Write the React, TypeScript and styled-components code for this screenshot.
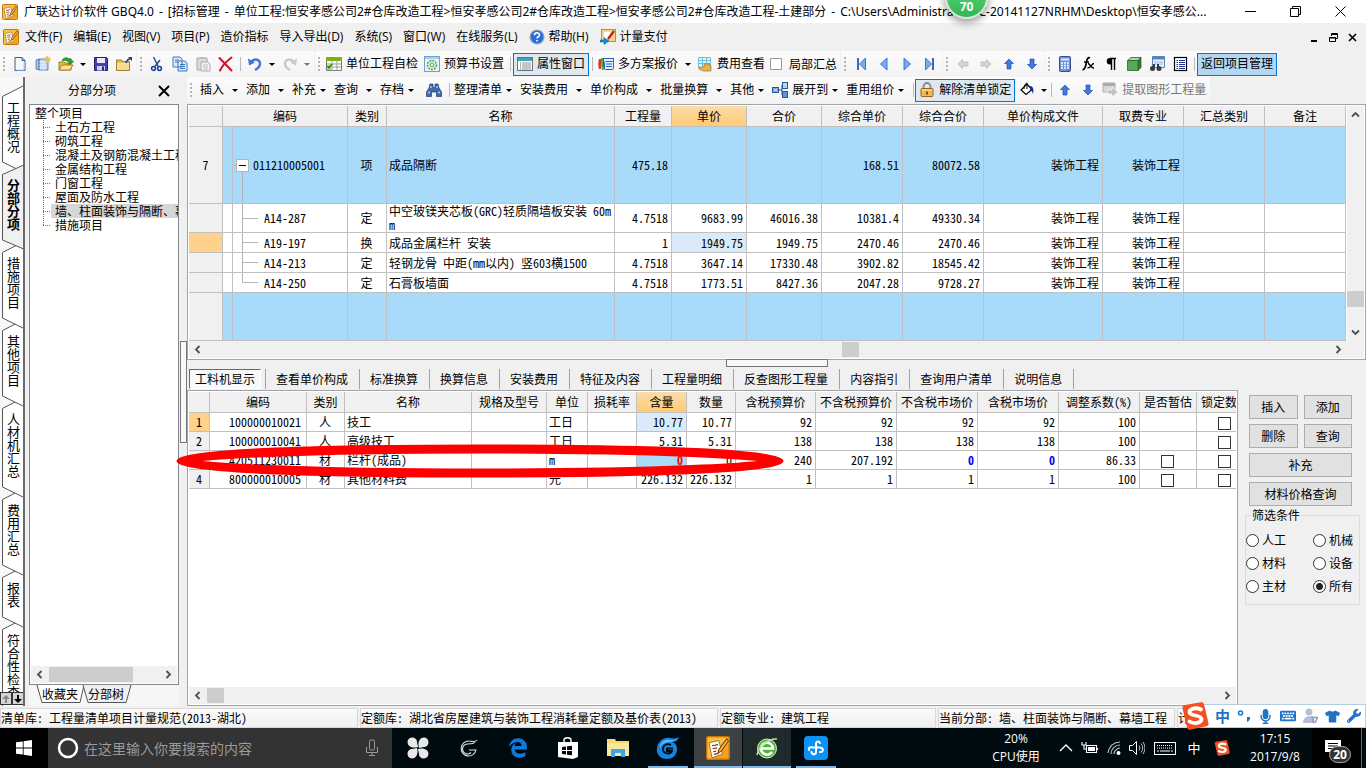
import React from "react";
import styled, { createGlobalStyle, css } from "styled-components";
import { FaEdgeLegacy, FaKeyboard, FaMicrophone, FaTshirt, FaWrench } from "react-icons/fa";

const uiFont = `"Open Sans", "Noto Sans CJK SC", sans-serif`;
const gridFont = `"Noto Sans CJK SC", sans-serif`;

const GlobalStyle = createGlobalStyle`
  * { box-sizing: border-box; }
  body { margin: 0; background: #f0f0f0; color: #000; font: 12px/16px ${uiFont}; overflow: hidden; }
  button, input { font: inherit; color: inherit; margin: 0; }
  button { border: 0; padding: 0; background: none; }
`;

const simsun = css`
  font-family: ${gridFont};
  font-feature-settings: "hwid";
`;

const Page = styled.div`
  display: flex;
  flex-direction: column;
  height: 100vh;
  min-width: 0;
  position: relative;
  overflow: hidden;
`;

/* ---------- title and menu ---------- */

const TitleBar = styled.header`
  display: flex;
  align-items: center;
  height: 23px;
  flex: none;
  padding: 0 3px 0 2px;
  gap: 6px;
  background: #fff;
`;

const TitleText = styled.h1`
  margin: 0;
  flex: 1;
  min-width: 0;
  font-family: "Noto Sans", "Noto Sans CJK SC", sans-serif;
  font-size: 12px;
  font-weight: 400;
  line-height: 16px;
  white-space: nowrap;
  overflow: hidden;
`;

const Dash = styled.span`
  margin: 0 5px;
`;

const WindowButtons = styled.div`
  display: flex;
`;

const WindowButton = styled.button`
  display: flex;
  align-items: center;
  justify-content: center;
  width: 45px;
  height: 20px;
`;

const SpeedBadge = styled.div`
  position: absolute;
  left: 945px;
  top: -24px;
  width: 43px;
  height: 43px;
  border-radius: 50%;
  border: 2px solid #d8e4da;
  background: linear-gradient(#5fdc80, #35b554);
  box-shadow: 0 3px 8px rgba(0, 0, 0, 0.45);
  color: #fff;
  font-weight: 700;
  line-height: 16px;
  padding-top: 21px;
  text-align: center;
  z-index: 5;
`;

const MenuBar = styled.nav`
  display: flex;
  align-items: center;
  height: 28px;
  flex: none;
  padding: 0 4px 0 3px;
`;

const MenuItem = styled.button`
  display: flex;
  align-items: center;
  gap: 4px;
  height: 20px;
  padding: 0 5px 0 6px;
  white-space: nowrap;
`;

const Spacer = styled.div`
  flex: 1;
`;

const MdiButton = styled.button`
  display: flex;
  align-items: center;
  justify-content: center;
  width: 19px;
  height: 16px;
`;

/* ---------- toolbars ---------- */

const ToolRow = styled.div<{ $h: number }>`
  display: flex;
  align-items: flex-start;
  height: ${(p) => p.$h}px;
  flex: none;
  gap: 1px;
  overflow: hidden;
`;

const ToolGroup = styled.div`
  display: flex;
  align-items: center;
  height: 26px;
  flex: none;
  padding-right: 1px;
  background: linear-gradient(#fcfcfc, #f3f3f3);
  border-radius: 2px;
`;

const Grip = styled.span`
  width: 8px;
  height: 15px;
  flex: none;
  background: repeating-linear-gradient(#b4b4b4 0 2px, transparent 2px 4px) 3px 0 / 2px 100% no-repeat;
`;

const Divider = styled.span<{ $m?: number }>`
  width: 1px;
  height: 14px;
  flex: none;
  margin: 0 ${(p) => p.$m ?? 2}px 0 ${(p) => p.$m ?? 3}px;
  background: #b8b8b8;
`;

const IconButton = styled.button`
  display: flex;
  align-items: center;
  justify-content: center;
  width: 23px;
  height: 22px;
  flex: none;
`;

const TextButton = styled.button<{ $on?: "light" | "strong"; $muted?: boolean }>`
  display: flex;
  align-items: center;
  gap: 4px;
  height: 23px;
  padding: 0 3px;
  flex: none;
  white-space: nowrap;
  color: ${(p) => (p.$muted ? "#777" : "#000")};
  ${(p) =>
    p.$on &&
    css`
      border: 1px solid #0078d7;
      background: ${p.$on === "strong" ? "#b3d7f3" : "#dde8f1"};
    `}
`;

const Caret = styled.span<{ $w: number; $muted?: boolean }>`
  display: flex;
  align-items: center;
  justify-content: center;
  width: ${(p) => p.$w}px;
  height: 20px;
  flex: none;
  &::after {
    content: "";
    border: 3px solid transparent;
    border-top-color: ${(p) => (p.$muted ? "#777" : "#000")};
    border-bottom: 0;
  }
`;

const MenuSet = styled.div`
  display: flex;
  padding-left: 5px;
`;

const MenuButton = styled.button<{ $split?: boolean }>`
  display: flex;
  align-items: center;
  height: 22px;
  flex: none;
  gap: ${(p) => (p.$split ? 4 : 0)}px;
  padding-right: 5px;
  white-space: nowrap;
  svg { margin-right: 4px; }
`;

const ToolCheck = styled.label`
  display: flex;
  align-items: center;
  gap: 7px;
  padding: 0 2px;
  white-space: nowrap;
  ${simsun}
`;

/* ---------- body ---------- */

const Body = styled.div`
  display: flex;
  flex: 1;
  min-height: 0;
`;

const SideTabs = styled.nav`
  width: 25px;
  flex: none;
  position: relative;
  overflow: hidden;
  padding-top: 12px;
  background: #f8f8f8;
  border-right: 2px solid #6a6a6a;
`;

const SideTab = styled.button<{ $z: number; $active?: boolean }>`
  display: block;
  position: relative;
  z-index: ${(p) => p.$z};
  width: 25px;
  padding: 11px 0 15px 2px;
  font-family: ${gridFont};
  font-size: 13px;
  line-height: 13px;
  font-weight: ${(p) => (p.$active ? 700 : 400)};
  text-align: center;
  span { display: block; position: relative; }
  svg { position: absolute; left: 0; top: 0; overflow: visible; }
`;

const SideScroll = styled.div`
  position: absolute;
  left: 0;
  bottom: 1px;
  z-index: 20;
  display: flex;
`;

const SideScrollButton = styled.button`
  display: flex;
  align-items: center;
  justify-content: center;
  width: 12px;
  height: 13px;
  border: 1px solid #333;
  background: #d4d4d4;
`;

const LeftPanel = styled.aside`
  display: flex;
  flex-direction: column;
  width: 155px;
  flex: none;
  padding-left: 4px;
`;

const PanelHead = styled.div`
  display: flex;
  align-items: center;
  height: 27px;
  padding: 0 10px 0 39px;
  justify-content: space-between;
`;

const TreeBox = styled.div`
  display: flex;
  flex-direction: column;
  flex: 1;
  width: 150px;
  border: 1px solid #828790;
  background: #fff;
  padding: 1px;
  overflow: hidden;
  ${simsun}
  line-height: 14px;
`;

const TreeRoot = styled.div`
  padding-left: 4px;
  height: 14px;
`;

const TreeList = styled.ul`
  list-style: none;
  margin: 0 0 0 12px;
  padding: 0;
  flex: 1;
`;

const TreeNode = styled.li<{ $selected?: boolean; $last?: boolean }>`
  display: flex;
  height: 14px;
  white-space: nowrap;
  &::before {
    content: "";
    flex: none;
    width: 8px;
    background: repeating-linear-gradient(#777 0 1px, transparent 1px 2px) 0 0 / 1px ${(p) => (p.$last ? "8px" : "100%")} no-repeat,
      repeating-linear-gradient(90deg, #777 0 1px, transparent 1px 2px) 0 7px / 8px 1px no-repeat;
  }
  span {
    flex: 1;
    padding-left: 4px;
    background: ${(p) => (p.$selected ? "#d6d6d6" : "transparent")};
  }
`;

const TreeTabs = styled.div`
  display: flex;
  height: 21px;
  flex: none;
  padding-left: 8px;
  background: #f6f6f6;
  width: 150px;
`;

const TreeTab = styled.button`
  position: relative;
  width: 46px;
  height: 18px;
  white-space: nowrap;
  ${simsun}
  svg { position: absolute; left: 0; top: 0; overflow: visible; }
  span { position: relative; }
`;

const VSplit = styled.div`
  display: flex;
  align-items: center;
  width: 7px;
  flex: none;
  &::after {
    content: "";
    width: 6px;
    height: 100px;
    border: 1px solid #777;
    background: #f8f8f8;
  }
`;

const Main = styled.main`
  display: flex;
  flex-direction: column;
  flex: 1;
  min-width: 0;
`;

const HSplit = styled.div`
  display: flex;
  justify-content: center;
  align-items: flex-end;
  height: 7px;
  flex: none;
  &::after {
    content: "";
    width: 100px;
    height: 6px;
    border: 1px solid #777;
    background: #f8f8f8;
  }
`;

/* ---------- grids ---------- */

const GridFrame = styled.section<{ $fill?: boolean }>`
  display: flex;
  flex-direction: column;
  flex: ${(p) => (p.$fill ? "1" : "none")};
  min-width: 0;
  padding: 1px;
  border: 1px solid #a0a4a8;
  background: #fff;
`;

const GridRow = styled.div<{ $fill?: boolean }>`
  display: flex;
  min-height: 0;
  flex: ${(p) => (p.$fill ? "1" : "none")};
`;

const GridView = styled.div`
  flex: 1;
  min-width: 0;
  overflow: hidden;
`;

const Grid = styled.table<{ $w: number }>`
  table-layout: fixed;
  width: ${(p) => p.$w}px;
  border-collapse: separate;
  border-spacing: 0;
  ${simsun}
  line-height: 14px;
`;

const Tr = styled.tr<{ $h: number; $blue?: boolean }>`
  height: ${(p) => p.$h}px;
  background: ${(p) => (p.$blue ? "#a8dafa" : "#fff")};
`;

const cellBorder = css`
  border: 0 solid #c0c0c0;
  border-width: 0 1px 1px 0;
`;

const Th = styled.th<{ $hot?: boolean }>`
  ${cellBorder}
  padding: 0;
  font-weight: 400;
  white-space: nowrap;
  overflow: hidden;
  background: ${(p) => (p.$hot ? "linear-gradient(#fbdcaa, #ffcb75)" : "#f0f0f0")};
`;

const RowHead = styled(Th)`
  background: ${(p) => (p.$hot ? "#ffd28c" : "#f0f0f0")};
`;

type Tone = "pale" | "blue";
const Td = styled.td<{ $align?: string; $tone?: Tone; $color?: string; $pad?: number }>`
  ${cellBorder}
  padding: 0 ${(p) => p.$pad ?? 3}px 0 2px;
  text-align: ${(p) => p.$align ?? "left"};
  overflow: hidden;
  word-break: break-all;
  ${(p) => p.$tone && css`background: ${p.$tone === "pale" ? "#dbeaf8" : "#a8dafa"};`}
  ${(p) => p.$color && css`color: ${p.$color}; font-weight: 700;`}
`;

const CodeTd = styled(Td)`
  padding: 0;
`;

const CodeLine = styled.div<{ $h: number }>`
  display: flex;
  align-items: center;
  height: ${(p) => p.$h - 1}px;
  &::before {
    content: "";
    width: 9px;
    height: 100%;
    border-right: 1px solid #c0c0c0;
  }
`;

const line = "linear-gradient(#b4b4b4, #b4b4b4)";
const Branch = styled.span<{ $kind: "root" | "mid" | "last" | "none" }>`
  display: flex;
  align-items: center;
  padding-left: ${(p) => (p.$kind === "root" ? 3 : 0)}px;
  width: ${(p) => (p.$kind === "root" ? 20 : 31)}px;
  height: 100%;
  background: ${(p) =>
    p.$kind === "none"
      ? "none"
      : p.$kind === "root"
        ? `${line} 9px 100% / 1px 50% no-repeat, ${line} 0 50% / 4px 1px no-repeat`
        : `${line} 9px 0 / 1px ${p.$kind === "last" ? "50%" : "100%"} no-repeat, ${line} 9px 50% / 16px 1px no-repeat`};
`;

const Toggle = styled.button`
  width: 13px;
  height: 13px;
  border: 1px solid #b4b4b4;
  background: linear-gradient(#000, #000) center / 7px 1px no-repeat #fff;
`;

const CheckBox = styled.input`
  appearance: none;
  display: inline-block;
  vertical-align: middle;
  width: 13px;
  height: 13px;
  border: 1px solid #333;
  background: #fff;
`;

const ToolCheckBox = styled(CheckBox)`
  width: 12px;
  height: 12px;
  border-color: #999;
`;

/* ---------- scroll bars ---------- */

const Bar = styled.div<{ $v?: boolean }>`
  display: flex;
  flex: none;
  flex-direction: ${(p) => (p.$v ? "column" : "row")};
  ${(p) => (p.$v ? "width" : "height")}: 17px;
  background: #f0f0f0;
`;

const BarButton = styled.button`
  display: flex;
  align-items: center;
  justify-content: center;
  width: 17px;
  height: 17px;
  flex: none;
`;

const Track = styled.span<{ $grow: number; $thumb?: boolean }>`
  flex: ${(p) => p.$grow} 0 0;
  margin: 1px 0;
  background: ${(p) => (p.$thumb ? "#cdcdcd" : "transparent")};
`;

const Corner = styled.span`
  width: 17px;
  flex: none;
`;

/* ---------- lower area ---------- */

const DetailTabs = styled.nav`
  display: flex;
  align-items: center;
  height: 23px;
  flex: none;
  padding: 0 2px;
  overflow: hidden;
  ${simsun}
`;

const DetailTab = styled.button<{ $active?: boolean }>`
  height: 20px;
  flex: none;
  padding: 0 11px 0 10px;
  border-right: 1px solid #a0a0a0;
  white-space: nowrap;
  ${(p) =>
    p.$active &&
    css`
      padding: 0 5px;
      margin-right: 4px;
      border: 1px solid #fff;
      border-top-color: #696969;
      border-left-color: #696969;
      background: #f8f8f8;
    `}
`;

const TabRule = styled.span`
  width: 1px;
  height: 20px;
  background: #a0a0a0;
`;

const Lower = styled.div`
  display: flex;
  flex: 1;
  min-height: 0;
  position: relative;
`;

const Mark = styled.svg`
  position: absolute;
  left: -14px;
  top: 53px;
  z-index: 4;
  pointer-events: none;
`;

const Actions = styled.aside`
  width: 128px;
  flex: none;
  padding: 5px 6px 0 7px;
  ${simsun}
`;

const ButtonGrid = styled.div`
  display: grid;
  grid-template-columns: 1fr 1fr;
  gap: 5px 6px;
  padding: 0 8px 0 4px;
`;

const PushButton = styled.button<{ $full?: boolean }>`
  height: 24px;
  border: 1px solid #adadad;
  background: #e1e1e1;
  white-space: nowrap;
  ${(p) => p.$full && css`grid-column: 1 / -1;`}
`;

const FilterBox = styled.fieldset`
  display: grid;
  grid-template-columns: 67px 1fr;
  row-gap: 7px;
  margin: 2px 0 0;
  min-width: 0;
  padding: 10px 0 10px;
  border: 1px solid #dcdcdc;
  legend { padding: 0 1px; margin-left: 5px; line-height: 14px; }
  label { display: flex; align-items: center; gap: 3px; height: 16px; white-space: nowrap; }
`;

const Radio = styled.input`
  appearance: none;
  flex: none;
  width: 13px;
  height: 13px;
  border: 1px solid #333;
  border-radius: 50%;
  background: #fff;
  &:checked { background: radial-gradient(#222 0 3px, #fff 4px); }
`;

/* ---------- status bar ---------- */

const StatusBar = styled.footer`
  display: flex;
  gap: 2px;
  height: 22px;
  flex: none;
  padding-top: 2px;
  ${simsun}
`;

const StatusCell = styled.div<{ $w?: number }>`
  ${(p) => (p.$w ? css`width: ${p.$w}px; flex: none;` : css`flex: 1;`)}
  border: 1px solid #d7d7d7;
  background: linear-gradient(#fafafa, #f0f0f0);
  line-height: 18px;
  white-space: nowrap;
  overflow: hidden;
`;

const ImeBar = styled.div`
  position: absolute;
  right: 0;
  bottom: 40px;
  z-index: 6;
  display: flex;
  align-items: center;
  justify-content: space-between;
  width: 172px;
  height: 24px;
  padding: 0 4px 0 20px;
  border: 1px solid #b4cfe4;
  background: #fff;
  color: #1e73c8;
  font: 700 15px/20px ${gridFont};
`;

const ImeLogo = styled.span`
  position: absolute;
  left: -14px;
  top: -3px;
`;

/* ---------- task bar ---------- */

const TaskBar = styled.footer`
  display: flex;
  height: 40px;
  flex: none;
  background: #000b10;
  color: #fff;
`;

const StartButton = styled.button`
  display: flex;
  align-items: center;
  justify-content: center;
  width: 48px;
  background: #000;
`;

const SearchBox = styled.label`
  display: flex;
  align-items: center;
  gap: 5px;
  width: 344px;
  padding: 0 13px 0 9px;
  background: #333;
  input {
    flex: 1;
    min-width: 0;
    border: 0;
    padding: 0;
    outline: 0;
    background: none;
    font: 14px/20px ${gridFont};
    &::placeholder { color: #9a9a9a; opacity: 1; }
  }
`;

const AppRow = styled.div`
  display: flex;
  padding-left: 2px;
`;

const AppButton = styled.button<{ $running?: boolean; $active?: string }>`
  display: flex;
  align-items: center;
  justify-content: center;
  width: 48px;
  margin-right: ${(p) => (p.$active ? 1 : 2)}px;
  padding-top: 3px;
  background: ${(p) => p.$active ?? "transparent"};
  border-bottom: 3px solid transparent;
  ${(p) => p.$running && css`
    background: linear-gradient(#7db9f0, #7db9f0) center 100% / ${p.$active ? "100%" : "40px"} 2px no-repeat border-box ${p.$active ?? "transparent"};
  `}
`;

const Tray = styled.div`
  display: flex;
  align-items: center;
  color: #fff;
`;

const TrayText = styled.div<{ $w: number }>`
  width: ${(p) => p.$w}px;
  font: 12px/18px ${uiFont};
  text-align: center;
  white-space: nowrap;
`;

const TrayIcon = styled.button<{ $w: number }>`
  display: flex;
  align-items: center;
  justify-content: center;
  width: ${(p) => p.$w}px;
  height: 40px;
  font: 13px/20px ${gridFont};
`;

const Notices = styled.button`
  position: relative;
  display: flex;
  align-items: center;
  justify-content: center;
  align-self: stretch;
  width: 50px;
  padding-right: 8px;
  background: #000;
  border-right: 1px solid #666;
  margin-right: 4px;
`;

const NoticeCount = styled.span`
  position: absolute;
  left: 17px;
  top: 18px;
  width: 22px;
  height: 17px;
  border: 1px solid #aaa;
  border-radius: 9px;
  background: #333;
  font: 700 12px/15px ${uiFont};
  text-align: center;
`;

/* ---------- icons ---------- */

const Svg = styled.svg`
  flex: none;
  display: block;
`;

type IconProps = { children: React.ReactNode; w?: number; h?: number; box?: string };
const Icon = ({ children, w = 16, h = 16, box = "0 0 16 16" }: IconProps) => (
  <Svg width={w} height={h} viewBox={box} fill="none" aria-hidden="true">{children}</Svg>
);

const AppIcon = ({ size = 16 }: { size?: number }) => (
  <Icon w={size} h={size}>
    <rect x=".5" y=".5" width="15" height="15" rx="1" fill="#f6a21d" stroke="#c87408" />
    <path d="M1 1h14v4L3 15H1z" fill="#ffd65c" opacity=".6" />
    <path d="M2 4.500L8.500 3l2.500 9-7 2.500z" fill="#fffdf4" stroke="#a06a20" strokeWidth=".6" />
    <path d="M4 6.500l4-.8M4.400 8.500l3-.6M4.800 10.500l2-.4M5.300 12.300l3-.7" stroke="#7a3b20" strokeWidth=".8" />
    <path d="M13.800 1.800L8.600 9l-.6 2.300 2-1 5-7z" fill="#f3b54a" stroke="#7a3d08" strokeWidth=".7" />
  </Icon>
);
const NewDoc = () => <Icon><path d="M3 1.500h7l3 3v10H3z" fill="#f4f8fd" stroke="#3a5f8c" /><path d="M10 1.500v3h3" stroke="#3a5f8c" /><path d="M12 6v8H5" stroke="#b9cde6" /></Icon>;
const NewProject = () => <Icon><path d="M1 4l3-1v11l-3-1zM4 3h9v11H4z" fill="#a9c8ec" stroke="#4674ad" strokeWidth=".8" /><path d="M6 4v10M8 4v10M10 4v10M4 6h8M4 9h8M4 12h8" stroke="#fff" strokeWidth=".7" /><path d="M12.500 0v7M9 3.500h7M10 1l5 5M15 1l-5 5" stroke="#f3c21a" strokeWidth="1.100" /></Icon>;
const OpenIcon = () => <Icon><path d="M1 6h5l1 1h6v7H1z" fill="#e6b94a" stroke="#8d6a14" strokeWidth=".8" /><path d="M1 14l3-5h11l-3 5z" fill="#ffe28a" stroke="#8d6a14" strokeWidth=".8" /><path d="M4 5C5 1 10 .5 12 4V2l3.500 4L11 8.500V6.500C9 4 6 4 4 5z" fill="#2aa52a" stroke="#14711a" strokeWidth=".6" /></Icon>;
const SaveIcon = () => <Icon><path d="M1.500 1.500h12l1 1v12h-13z" fill="#4440b4" stroke="#26226e" /><rect x="4" y="2" width="8" height="5" fill="#e8e8f6" /><rect x="4" y="10" width="8" height="4.500" fill="#d0d0e8" /><rect x="9" y="10.500" width="2" height="4" fill="#26226e" /></Icon>;
const FolderUp = () => <Icon><path d="M.5 4h5l1 1.500h7v9H.5z" fill="#e4bf62" stroke="#866616" strokeWidth=".8" /><path d="M1 7h12v7H1z" fill="#f6dd93" /><path d="M10 7c1-3 2-4 4-4V1.500" stroke="#333c70" strokeWidth="1.400" /><path d="M12 1h4v4z" fill="#333c70" /></Icon>;
const CutIcon = () => <Icon><path d="M4.500 1l5 10M11 4L5.500 11" stroke="#2b4672" strokeWidth="1.400" /><circle cx="4.500" cy="12.500" r="1.900" stroke="#123f9e" strokeWidth="1.500" /><circle cx="10.500" cy="12.500" r="1.900" stroke="#123f9e" strokeWidth="1.500" /></Icon>;
const CopyIcon = () => <Icon><path d="M1 1h7l2 2v8H1zM6 5h7l2 2v8H6z" fill="#dbe9f9" stroke="#3e78bd" /><path d="M3 4h4M3 6h3M8 8.500h5M8 10.500h5M8 12.500h5" stroke="#3e78bd" /></Icon>;
const PasteIcon = () => <Icon><path d="M2 2h10v12H2z" fill="#dadada" stroke="#a8a8a8" /><path d="M5 1h4v2H5z" fill="#bbb" /><path d="M6 6h7l2 2v7H6z" fill="#f2f2f2" stroke="#b0b0b0" /><path d="M8 9h5M8 11h5M8 13h5" stroke="#c0c0c0" /></Icon>;
const DeleteIcon = () => <Icon><path d="M1.500 2l12 12.500M13.500 1.500C9 5 4 10 2 14.500" stroke="#cf1130" strokeWidth="2" strokeLinecap="round" /></Icon>;
const UndoIcon = ({ gray }: { gray?: boolean }) => (
  <Icon><g transform={gray ? "matrix(-1 0 0 1 16 0)" : undefined}><path d="M4 6c3-4 9-3 9 1.500 0 3-2 5-5 6.500" stroke={gray ? "#c9c9c9" : "#4174d9"} strokeWidth="2.400" /><path d="M1 2.500l1 7 6-3z" fill={gray ? "#c9c9c9" : "#4174d9"} /></g></Icon>
);
const SheetIcon = () => <Icon><path d="M.5 1.500h15v13H.5z" fill="#fff" stroke="#777" /><path d="M0 1h16v4H0z" fill="#77b31f" /><path d="M1 8h14M1 11h14M6 5v10M11 5v10" stroke="#999" /><path d="M1 7h5v7H1z" fill="#b8dd84" /><path d="M1.500 10l1.500 2 3-4" stroke="#2a7a10" strokeWidth="1.300" /></Icon>;
const GearSheet = () => <Icon><rect x=".5" y=".5" width="15" height="15" fill="#e8f2f8" stroke="#6fa3c7" /><path d="M1 1h14v2H1z" fill="#a9cfe8" /><circle cx="8" cy="9" r="4.500" stroke="#58a45a" strokeWidth="1.600" strokeDasharray="2 1" /><circle cx="8" cy="9" r="2" stroke="#58a45a" /></Icon>;
const PropIcon = () => <Icon><rect x=".5" y="1.500" width="15" height="13" fill="#fff" stroke="#68727a" /><path d="M1 2h14v3H1z" fill="#3ea2c0" /><path d="M3 7h1M3 9h1M3 11h1M3 13h1" stroke="#3a8a3a" /><path d="M5 7h9M5 9h9M5 11h9M5 13h9" stroke="#8a8a8a" /></Icon>;
const PlanIcon = () => <Icon><path d="M1 3c-1 3-1 7 0 10h2V3z" fill="#d23c2f" /><path d="M3 2h3v12H4c-1-3-1-8-1-12z" fill="#4fae3a" /><rect x="5.500" y="2.500" width="10" height="8" fill="#e5effb" stroke="#2a63c0" /><rect x="6.500" y="5.500" width="9" height="8" rx="1" fill="#e5effb" stroke="#2a63c0" /><path d="M8 8h6M8 10.500h6" stroke="#2a63c0" /></Icon>;
const CostIcon = () => <Icon><path d="M1.500 1.500h12v10h-12z" fill="#dff3fb" stroke="#6ec0de" /><path d="M1.500 4.500h12M1.500 7.500h12M5.500 1.500v10M9.500 1.500v10" stroke="#6ec0de" /><path d="M7 8h6v2h1v5H6l-4-2v-2h5z" fill="#e3b257" stroke="#a87620" strokeWidth=".7" /></Icon>;
const NavIcon = ({ back, end }: { back?: boolean; end?: boolean }) => (
  <Icon><g transform={back ? "matrix(-1 0 0 1 16 0)" : undefined}><path d={end ? "M3.500 2v12l6-6z" : "M5 2v12l6.500-6z"} fill="#7fa9ee" stroke="#3469c8" strokeWidth=".9" />{end && <path d="M11 2v12" stroke="#3469c8" strokeWidth="2" />}</g></Icon>
);
const ArrowIcon = ({ turn, gray }: { turn: number; gray?: boolean }) => (
  <Icon><path transform={`rotate(${turn} 8 8)`} d="M8 3l4.500 4.500H10V13H6V7.500H3.500z" fill={gray ? "#d4d4d4" : "#3e78e0"} stroke={gray ? "#b4b4b4" : "#1f4fae"} strokeWidth=".7" /></Icon>
);
const CalcIcon = () => <Icon><rect x="2.500" y=".5" width="11" height="15" rx="1" fill="#6e92d8" stroke="#31508f" /><path d="M4 2.500h8v2H4z" fill="#dcebfa" /><path d="M4 7h8M4 9.500h8M4 12h8" stroke="#fff" strokeWidth="1.500" strokeDasharray="2 1" /><path d="M10 14h2" stroke="#d33" /></Icon>;
const FxIcon = () => <Icon><path d="M10 2c-2-1-3 1-3.500 4S5 14 2.500 13.500M4 6h5" stroke="#000" strokeWidth="1.700" /><path d="M8 7.500c2 0 3 5 6 4.500M14 7.500c-2 0-4 5-6.500 4.500" stroke="#000" strokeWidth="1.400" /></Icon>;
const PilcrowIcon = () => <Icon><path d="M13 2.500H7M8.500 3v11M11.500 3v11" stroke="#000" strokeWidth="1.400" /><path d="M8.500 2H7a3 3 0 000 6.500h1.500z" fill="#000" /></Icon>;
const CubeIcon = () => <Icon><path d="M1.500 4.500L5 1.500h10l-3 3z" fill="#a5dca5" stroke="#2b662b" strokeWidth=".8" /><path d="M12 4.500l3-3v10l-3 3z" fill="#2f7a34" stroke="#2b662b" strokeWidth=".8" /><path d="M1.500 4.500H12v10H1.500z" fill="#58a85b" stroke="#2b662b" strokeWidth=".8" /></Icon>;
const FindSheet = () => <Icon><path d="M3.500.5h12v11h-12z" fill="#edf3fb" stroke="#5c82bb" /><path d="M3 .5h13v3H3z" fill="#5c82bb" /><path d="M5 6h9M5 8h9" stroke="#9ab4d8" /><circle cx="3.500" cy="12.500" r="2.500" fill="#333c4f" /><circle cx="10" cy="12.500" r="2.500" fill="#333c4f" /><path d="M4 8h2v3H4zM8 8h2v3H8z" fill="#333c4f" /></Icon>;
const ListIcon = () => <Icon><rect x="2.500" y="1.500" width="12" height="13" fill="#fff" stroke="#000" strokeWidth="1.200" /><path d="M4.500 4.500H6M4.500 6.500H6M4.500 8.500H6M4.500 10.500H6M4.500 12.500H6M7 4.500h6M7 6.500h6M7 8.500h6M7 10.500h6M7 12.500h6" stroke="#22309a" /></Icon>;
const Binoculars = () => <Icon><path d="M4 2h3v3l1 1 1-1V2h3l1 4 2.500 4v4.500h-5V10H5.500v4.500h-5V10L3 6z" fill="#3f69ab" stroke="#1e3e74" strokeWidth=".7" /><path d="M2 10.500h2M12 10.500h2M5 4v2M11 4v2" stroke="#bcd2f2" strokeWidth="1.300" /></Icon>;
const ExpandIcon = () => <Icon><path d="M6 8h4M10 3v10" stroke="#444" /><rect x=".5" y="5.500" width="6" height="5" fill="#5e92da" stroke="#2a579c" /><path d="M1.500 6.500l4 3M5.500 6.500l-4 3" stroke="#fff" strokeWidth=".8" /><rect x="10.500" y=".5" width="5" height="6" fill="#b9d3f4" stroke="#2a579c" /><rect x="10.500" y="9.500" width="5" height="6" fill="#5e92da" stroke="#2a579c" /></Icon>;
const LockIcon = () => <Icon><path d="M4.500 7V4.500a3.500 3.500 0 017 0V7" stroke="#8b8b8b" strokeWidth="1.800" /><rect x="2" y="6.500" width="12" height="8" rx="1" fill="#f0b84d" stroke="#996414" /><path d="M3 8h10" stroke="#ffe3a0" /><path d="M8 9.500v3" stroke="#5a3a08" strokeWidth="1.600" /></Icon>;
const BucketIcon = () => <Icon><path d="M2 8l6-6 5 5.500-6 5z" fill="#fff" stroke="#000" strokeWidth="1.200" /><path d="M5 7c0-4 2-6 3-6v6" stroke="#000" /><path d="M11 4c3 0 4 3 3 8-1-3-2-4-3-4z" fill="#1b2f88" /></Icon>;
const ExtractIcon = () => <Icon><path d="M1 1h12v9H1z" fill="#d8d8d8" stroke="#b0b0b0" /><path d="M1 1h12v3H1z" fill="#aaa" /><path d="M5 8h5V5l6 5-6 5v-3H6z" fill="#c2c2c2" stroke="#fff" strokeWidth=".6" /></Icon>;
const HelpIcon = () => <Icon><circle cx="8" cy="8" r="7" fill="#2e6cd8" stroke="#9aa9c0" strokeWidth="1.200" /><path d="M5.500 6.200c0-3.200 5-3.200 5-.2 0 1.700-2.500 1.800-2.500 3.500M8 11v1.600" stroke="#fff" strokeWidth="1.600" /></Icon>;
const PayIcon = () => <Icon><rect x="1.500" y=".5" width="14" height="12" fill="#fbd48a" stroke="#d18a1e" /><path d="M4 3h6v7H4z" fill="#fff" /><path d="M14 2L8 10" stroke="#b8201c" strokeWidth="2.200" /><path d="M0 11h4V8.500l5 3.500-5 3.500V13H0z" fill="#1787d8" stroke="#0b5b98" strokeWidth=".5" /></Icon>;

const Chevron = ({ turn }: { turn: number }) => (
  <Icon w={9} h={9} box="0 0 9 9"><path transform={`rotate(${turn} 4.500 4.500)`} d="M6.500 1L3 4.500 6.500 8" stroke="#505050" strokeWidth="1.800" /></Icon>
);

const SLogo = ({ size }: { size: number }) => (
  <Icon w={size} h={size} box="0 0 28 28">
    <path d="M1.500 6Q1 3.500 3.500 3L20 .3q2.500-.5 3 2l4.500 19q.5 2.500-2 3L9 27.700q-2.500.3-3-2z" fill="#f4511e" />
    <path d="M20 7.500C15 5 8 6.500 8.500 10.500c.5 4 12 2 12 6.500 0 4.500-8 5-12 2.500" stroke="#fff" strokeWidth="3.800" strokeLinecap="round" />
  </Icon>
);

/* ---------- data ---------- */

const menus = ["文件(F)", "编辑(E)", "视图(V)", "项目(P)", "造价指标", "导入导出(D)", "系统(S)", "窗口(W)", "在线服务(L)"];
const sideTabs = ["工程概况", "分部分项", "措施项目", "其他项目", "人材机汇总", "费用汇总", "报表", "符合性检查"];
const treeItems = ["土石方工程", "砌筑工程", "混凝土及钢筋混凝土工程", "金属结构工程", "门窗工程", "屋面及防水工程", "墙、柱面装饰与隔断、幕墙工程", "措施项目"];
const detailTabs = ["查看单价构成", "标准换算", "换算信息", "安装费用", "特征及内容", "工程量明细", "反查图形工程量", "内容指引", "查询用户清单", "说明信息"];

const topCols = [34, 125, 39, 228, 57, 75, 75, 81, 81, 119, 81, 81, 81];
const topHeads = ["", "编码", "类别", "名称", "工程量", "单价", "合价", "综合单价", "综合合价", "单价构成文件", "取费专业", "汇总类别", "备注"];
type TopRow = { h: number; no?: string; kind: "root" | "mid" | "last" | "none"; blue?: boolean; hot?: boolean; code: string; type: string; name: string; nums: string[]; file: string };
const topRows: TopRow[] = [
  { h: 77, no: "7", kind: "root", blue: true, code: "011210005001", type: "项", name: "成品隔断", nums: ["475.18", "", "", "168.51", "80072.58"], file: "装饰工程" },
  { h: 29, kind: "mid", code: "A14-287", type: "定", name: "中空玻镁夹芯板(GRC)轻质隔墙板安装 60mm", nums: ["4.7518", "9683.99", "46016.38", "10381.4", "49330.34"], file: "装饰工程" },
  { h: 20, kind: "mid", hot: true, code: "A19-197", type: "换", name: "成品金属栏杆 安装", nums: ["1", "1949.75", "1949.75", "2470.46", "2470.46"], file: "装饰工程" },
  { h: 20, kind: "mid", code: "A14-213", type: "定", name: "轻钢龙骨 中距(mm以内) 竖603横1500", nums: ["4.7518", "3647.14", "17330.48", "3902.82", "18545.42"], file: "装饰工程" },
  { h: 20, kind: "last", code: "A14-250", type: "定", name: "石膏板墙面", nums: ["4.7518", "1773.51", "8427.36", "2047.28", "9728.27"], file: "装饰工程" },
  { h: 48, kind: "none", blue: true, code: "", type: "", name: "", nums: ["", "", "", "", ""], file: "" },
];

const lowCols = [21, 97, 38, 127, 75, 41, 49, 50, 49, 80, 81, 81, 81, 81, 57, 57];
const lowHeads = ["", "编码", "类别", "名称", "规格及型号", "单位", "损耗率", "含量", "数量", "含税预算价", "不含税预算价", "不含税市场价", "含税市场价", "调整系数(%)", "是否暂估", "锁定数量"];
const lowRows = [
  { code: "100000010021", type: "人", name: "技工", unit: "工日", nums: ["10.77", "10.77", "92", "92", "92", "92", "100"], est: false },
  { code: "100000010041", type: "人", name: "高级技工", unit: "工日", nums: ["5.31", "5.31", "138", "138", "138", "138", "100"], est: false },
  { code: "420511230011", type: "材", name: "栏杆(成品)", unit: "m", nums: ["0", "0", "240", "207.192", "0", "0", "86.33"], est: true },
  { code: "800000010005", type: "材", name: "其他材料费", unit: "元", nums: ["226.132", "226.132", "1", "1", "1", "1", "100"], est: true },
];
const sum = (list: number[]) => list.reduce((a, b) => a + b, 0);

/* ---------- parts ---------- */

const HBar = ({ before, thumb, after, corner }: { before: number; thumb: number; after: number; corner?: boolean }) => (
  <Bar>
    <BarButton aria-label="向左"><Chevron turn={0} /></BarButton>
    <Track $grow={before} /><Track $grow={thumb} $thumb /><Track $grow={after} />
    <BarButton aria-label="向右"><Chevron turn={180} /></BarButton>
    {corner && <Corner />}
  </Bar>
);

const Drop = ({ text, split, icon }: { text: string; split?: boolean; icon?: React.ReactNode }) => (
  <MenuButton $split={split}>{icon}{text}<Caret $w={13} /></MenuButton>
);

const TopGrid = () => (
  <GridFrame>
    <GridRow>
      <GridView>
        <Grid $w={sum(topCols)}>
          <colgroup>{topCols.map((w, i) => <col key={i} width={w} />)}</colgroup>
          <thead>
            <Tr $h={21}>{topHeads.map((t, i) => <Th key={i} scope="col" $hot={t === "单价"}>{t}</Th>)}</Tr>
          </thead>
          <tbody>
            {topRows.map((r, i) => (
              <Tr key={i} $h={r.h} $blue={r.blue}>
                <RowHead scope="row" $hot={r.hot}>{r.no}</RowHead>
                <CodeTd>
                  <CodeLine $h={r.h}>
                    <Branch $kind={r.kind}>{r.kind === "root" && <Toggle aria-label="折叠" />}</Branch>
                    {r.code}
                  </CodeLine>
                </CodeTd>
                <Td $align="center">{r.type}</Td>
                <Td $pad={0}>{r.name}</Td>
                {r.nums.map((n, k) => <Td key={k} $align="right" $tone={r.hot && k === 1 ? "pale" : undefined}>{n}</Td>)}
                <Td $align="right">{r.file}</Td>
                <Td $align="right">{r.file}</Td>
                <Td />
                <Td />
              </Tr>
            ))}
          </tbody>
        </Grid>
      </GridView>
      <Bar $v>
        <BarButton aria-label="向上"><Chevron turn={90} /></BarButton>
        <Track $grow={170} /><Track $grow={17} $thumb /><Track $grow={14} />
        <BarButton aria-label="向下"><Chevron turn={270} /></BarButton>
      </Bar>
    </GridRow>
    <HBar before={637} thumb={17} after={471} corner />
  </GridFrame>
);

const LowGrid = () => (
  <GridFrame $fill>
    <GridRow $fill>
      <GridView>
        <Grid $w={sum(lowCols)}>
          <colgroup>{lowCols.map((w, i) => <col key={i} width={w} />)}</colgroup>
          <thead>
            <Tr $h={21}>{lowHeads.map((t, i) => <Th key={i} scope="col" $hot={t === "含量"}>{t}</Th>)}</Tr>
          </thead>
          <tbody>
            {lowRows.map((r, i) => (
              <Tr key={r.code} $h={19}>
                <RowHead scope="row" $hot={i === 0}>{i + 1}</RowHead>
                <Td $align="right" $pad={5}>{r.code}</Td>
                <Td $align="center">{r.type}</Td>
                <Td>{r.name}</Td>
                <Td />
                <Td>{r.unit}</Td>
                <Td />
                {r.nums.map((n, k) => (
                  <Td
                    key={k}
                    $align="right"
                    $tone={k === 0 ? (i === 0 ? "pale" : i === 2 ? "blue" : undefined) : undefined}
                    $color={i === 2 ? (k === 0 ? "#f00" : k === 4 || k === 5 ? "#00f" : undefined) : undefined}
                  >
                    {n}
                  </Td>
                ))}
                <Td $align="center">{r.est && <CheckBox type="checkbox" aria-label="是否暂估" />}</Td>
                <Td $align="center"><CheckBox type="checkbox" aria-label="锁定数量" /></Td>
              </Tr>
            ))}
          </tbody>
        </Grid>
      </GridView>
    </GridRow>
    <HBar before={1} thumb={17} after={996} />
  </GridFrame>
);

const SideNav = () => (
  <SideTabs>
    {sideTabs.map((t, i) => {
      const h = t.length * 13 + 26;
      const active = i === 1;
      return (
        <SideTab key={t} $z={active ? 15 : 10 - i} $active={active}>
          <svg width="25" height={h} aria-hidden="true">
            <path d={`M${active ? 26 : 23} -3L2.500 7.500V${h - 5}L${active ? 26 : 23} ${h + 5}`} fill={active ? "#f0f0f0" : "#fff"} stroke="#555" />
          </svg>
          {t.split("").map((c, k) => <span key={k}>{c}</span>)}
        </SideTab>
      );
    })}
    <SideScroll>
      <SideScrollButton aria-label="上移"><Icon w={8} h={8} box="0 0 8 8"><path d="M4 0l4 4H5v4H3V4H0z" fill="#888" /></Icon></SideScrollButton>
      <SideScrollButton aria-label="下移"><Icon w={8} h={8} box="0 0 8 8"><path d="M4 8l4-4H5V0H3v4H0z" fill="#000" /></Icon></SideScrollButton>
    </SideScroll>
  </SideTabs>
);

const Filters = () => (
  <FilterBox>
    <legend>筛选条件</legend>
    {["人工", "机械", "材料", "设备", "主材", "所有"].map((t) => (
      <label key={t}><Radio type="radio" name="kind" defaultChecked={t === "所有"} />{t}</label>
    ))}
  </FilterBox>
);

const blade = "M11 10C4 12-1 8 1 3 3-1 10 0 10 5c0 2 1 3 1 5z";

export default function App() {
  return (
    <Page>
      <GlobalStyle />
      <TitleBar>
        <AppIcon />
        <TitleText>
          广联达计价软件 GBQ4.0<Dash>-</Dash>[招标管理<Dash>-</Dash>单位工程:恒安孝感公司2#仓库改造工程&gt;恒安孝感公司2#仓库改造工程&gt;恒安孝感公司2#仓库改造工程-土建部分<Dash>-</Dash>C:\Users\Administrator.PC-20141127NRHM\Desktop\恒安孝感公...
        </TitleText>
        <WindowButtons>
          <WindowButton aria-label="最小化"><Icon w={11} h={11} box="0 0 11 11"><path d="M0 5.500h11" stroke="#000" /></Icon></WindowButton>
          <WindowButton aria-label="还原"><Icon w={11} h={11} box="0 0 11 11"><path d="M.5 2.500h8v8h-8zM2.500 2.500v-2h8v8h-2" stroke="#000" /></Icon></WindowButton>
          <WindowButton aria-label="关闭"><Icon w={11} h={11} box="0 0 11 11"><path d="M.5.5l10 10M10.500.5l-10 10" stroke="#000" /></Icon></WindowButton>
        </WindowButtons>
      </TitleBar>
      <SpeedBadge>70</SpeedBadge>

      <MenuBar>
        <AppIcon />
        {menus.map((m) => <MenuItem key={m}>{m}</MenuItem>)}
        <MenuItem><HelpIcon />帮助(H)</MenuItem>
        <MenuItem><PayIcon />计量支付</MenuItem>
        <Spacer />
        <MdiButton aria-label="最小化子窗口"><Icon w={9} h={9} box="0 0 9 9"><path d="M1 8h6" stroke="#000" strokeWidth="2" /></Icon></MdiButton>
        <MdiButton aria-label="还原子窗口"><Icon w={9} h={9} box="0 0 9 9"><path d="M.5 4.500h6v4h-6zM2.500 3V.5h6v5H7M2 1.500h7M0 5h7" stroke="#000" /></Icon></MdiButton>
        <MdiButton aria-label="关闭子窗口"><Icon w={9} h={9} box="0 0 9 9"><path d="M1 1l7 7M8 1L1 8" stroke="#000" strokeWidth="1.600" /></Icon></MdiButton>
      </MenuBar>

      <ToolRow $h={26}>
        <ToolGroup>
          <Grip />
          <IconButton aria-label="新建"><NewDoc /></IconButton>
          <IconButton aria-label="新建项目"><NewProject /></IconButton>
          <IconButton aria-label="打开"><OpenIcon /></IconButton>
          <Caret $w={12} />
          <IconButton aria-label="保存"><SaveIcon /></IconButton>
          <IconButton aria-label="关闭工程"><FolderUp /></IconButton>
        </ToolGroup>
        <ToolGroup>
          <Grip />
          <IconButton aria-label="剪切"><CutIcon /></IconButton>
          <IconButton aria-label="复制"><CopyIcon /></IconButton>
          <IconButton aria-label="粘贴"><PasteIcon /></IconButton>
          <IconButton aria-label="删除"><DeleteIcon /></IconButton>
          <Divider />
          <IconButton aria-label="撤销"><UndoIcon /></IconButton>
          <Caret $w={12} />
          <IconButton aria-label="恢复"><UndoIcon gray /></IconButton>
          <Caret $w={12} $muted />
        </ToolGroup>
        <ToolGroup>
          <Grip />
          <TextButton><SheetIcon />单位工程自检</TextButton>
          <TextButton><GearSheet />预算书设置</TextButton>
          <Divider />
          <TextButton $on="light"><PropIcon />属性窗口</TextButton>
          <Divider />
          <TextButton><PlanIcon />多方案报价</TextButton>
          <Caret $w={13} />
          <TextButton><CostIcon />费用查看</TextButton>
          <ToolCheck><ToolCheckBox type="checkbox" />局部汇总</ToolCheck>
        </ToolGroup>
        <ToolGroup>
          <Grip />
          <IconButton aria-label="首条"><NavIcon back end /></IconButton>
          <IconButton aria-label="上一条"><NavIcon back /></IconButton>
          <IconButton aria-label="下一条"><NavIcon /></IconButton>
          <IconButton aria-label="末条"><NavIcon end /></IconButton>
        </ToolGroup>
        <ToolGroup>
          <Grip />
          <IconButton aria-label="左移"><ArrowIcon turn={270} gray /></IconButton>
          <IconButton aria-label="右移"><ArrowIcon turn={90} gray /></IconButton>
          <IconButton aria-label="上移"><ArrowIcon turn={0} /></IconButton>
          <IconButton aria-label="下移"><ArrowIcon turn={180} /></IconButton>
        </ToolGroup>
        <ToolGroup>
          <Grip />
          <IconButton aria-label="计算器"><CalcIcon /></IconButton>
          <IconButton aria-label="函数"><FxIcon /></IconButton>
          <IconButton aria-label="段落"><PilcrowIcon /></IconButton>
          <IconButton aria-label="图元"><CubeIcon /></IconButton>
          <IconButton aria-label="查找"><FindSheet /></IconButton>
          <IconButton aria-label="列表"><ListIcon /></IconButton>
          <Divider />
          <TextButton $on="strong">返回项目管理</TextButton>
        </ToolGroup>
      </ToolRow>

      <Body>
        <SideNav />
        <LeftPanel>
          <PanelHead>
            分部分项
            <button aria-label="关闭面板"><Icon w={12} h={12} box="0 0 12 12"><path d="M1 1l10 10M11 1L1 11" stroke="#000" strokeWidth="2" /></Icon></button>
          </PanelHead>
          <TreeBox>
            <TreeRoot>整个项目</TreeRoot>
            <TreeList>
              {treeItems.map((t, i) => <TreeNode key={t} $selected={i === 6} $last={i === 7}><span>{t}</span></TreeNode>)}
            </TreeList>
            <HBar before={1} thumb={84} after={27} />
          </TreeBox>
          <TreeTabs>
            <TreeTab>
              <svg width="46" height="18" aria-hidden="true"><path d="M0 0l5 17.500h38L47 0" fill="#fff" stroke="#555" /></svg>
              <span>收藏夹</span>
            </TreeTab>
            <TreeTab>
              <svg width="46" height="18" aria-hidden="true"><path d="M0 0l5 17.500h38L48 0" fill="#f0f0f0" stroke="#555" /></svg>
              <span>分部树</span>
            </TreeTab>
          </TreeTabs>
        </LeftPanel>
        <VSplit />
        <Main>
          <ToolRow $h={27}>
            <ToolGroup>
              <Grip />
              <MenuSet>
                <Drop text="插入" split />
                <Drop text="添加" split />
                <Drop text="补充" />
                <Drop text="查询" split />
                <Drop text="存档" />
              </MenuSet>
              <IconButton aria-label="查找"><Binoculars /></IconButton>
              <Divider $m={4} />
              <Drop text="整理清单" />
              <Drop text="安装费用" split />
              <Drop text="单价构成" split />
              <Drop text="批量换算" split />
              <Drop text="其他" />
              <Drop text="展开到" icon={<ExpandIcon />} />
              <Drop text="重用组价" />
              <Divider $m={1} />
              <TextButton $on="light"><LockIcon />解除清单锁定</TextButton>
              <IconButton aria-label="填充颜色"><BucketIcon /></IconButton>
              <Caret $w={12} />
              <Divider $m={1} />
              <IconButton aria-label="上移"><ArrowIcon turn={0} /></IconButton>
              <IconButton aria-label="下移"><ArrowIcon turn={180} /></IconButton>
              <TextButton $muted><ExtractIcon />提取图形工程量</TextButton>
            </ToolGroup>
          </ToolRow>
          <TopGrid />
          <HSplit />
          <DetailTabs>
            <DetailTab $active>工料机显示</DetailTab>
            <TabRule />
            {detailTabs.map((t) => <DetailTab key={t}>{t}</DetailTab>)}
          </DetailTabs>
          <Lower>
            <LowGrid />
            <Actions>
              <ButtonGrid>
                <PushButton>插入</PushButton>
                <PushButton>添加</PushButton>
                <PushButton>删除</PushButton>
                <PushButton>查询</PushButton>
                <PushButton $full>补充</PushButton>
                <PushButton $full>材料价格查询</PushButton>
              </ButtonGrid>
              <Filters />
            </Actions>
            <Mark width="614" height="36" fill="none" aria-hidden="true">
              <ellipse cx="307" cy="18" rx="299" ry="12" stroke="#f00" strokeWidth="9" />
            </Mark>
          </Lower>
        </Main>
      </Body>

      <StatusBar>
        <StatusCell $w={358}>清单库: 工程量清单项目计量规范(2013-湖北)</StatusCell>
        <StatusCell $w={358}>定额库: 湖北省房屋建筑与装饰工程消耗量定额及基价表(2013)</StatusCell>
        <StatusCell $w={216}>定额专业: 建筑工程</StatusCell>
        <StatusCell $w={237}>当前分部: 墙、柱面装饰与隔断、幕墙工程</StatusCell>
        <StatusCell>计税模式</StatusCell>
      </StatusBar>

      <ImeBar>
        <ImeLogo><SLogo size={28} /></ImeLogo>
        <span>中</span>
        <Icon w={14} h={14} box="0 0 14 14"><circle cx="3.500" cy="4" r="2" stroke="#1e73c8" strokeWidth="1.500" /><path d="M10 8h3c0 3-1 4-3 5" fill="#1e73c8" /></Icon>
        <FaMicrophone size={15} />
        <FaKeyboard size={16} />
        <Icon><circle cx="7" cy="4" r="3.500" fill="#b4c0d6" /><path d="M1 15c0-9 12-9 12 0z" fill="#b4c0d6" /><path d="M9 9h2v6M12 9.500h3.500L13 15" stroke="#8796b4" strokeWidth="1.300" /></Icon>
        <FaTshirt size={15} />
        <FaWrench size={14} />
      </ImeBar>

      <TaskBar>
        <StartButton aria-label="开始">
          <Icon><path d="M0 2.300L6.800 1.400v6.200H0zM7.600 1.300L16 0v7.600H7.600zM0 8.400h6.800v6.200L0 13.700zM7.600 8.400H16V16l-8.400-1.300z" fill="#fff" /></Icon>
        </StartButton>
        <SearchBox>
          <Icon w={22} h={22} box="0 0 22 22"><circle cx="11" cy="11" r="9" stroke="#fff" strokeWidth="2.500" /></Icon>
          <input aria-label="搜索" placeholder="在这里输入你要搜索的内容" />
          <Icon w={14} h={18} box="0 0 14 18"><rect x="4.500" y="1" width="5" height="10" rx="1.500" stroke="#999" /><path d="M1.500 8v5.500h11V8M7 13.500V17M4 16.500h6" stroke="#999" /></Icon>
        </SearchBox>
        <AppRow>
          <AppButton aria-label="风扇">
            <Icon w={22} h={22} box="0 0 22 22">
              {[0, 90, 180, 270].map((a) => <path key={a} d={blade} transform={`rotate(${a} 11 11)`} fill="#e8e8e8" />)}
            </Icon>
          </AppButton>
          <AppButton aria-label="浏览器">
            <Icon w={20} h={20} box="0 0 20 20"><path d="M19 2c-2 3-5 1-8 1a7.500 7.500 0 107 9h-7M17 4c-2 3-5 1-7 2a5 5 0 103 8.500" stroke="#ddd" strokeWidth="1.100" /></Icon>
          </AppButton>
          <AppButton aria-label="Edge"><FaEdgeLegacy size={20} color="#0a7bdc" /></AppButton>
          <AppButton aria-label="应用商店">
            <Icon w={22} h={24} box="0 0 22 24"><path d="M7 7V4c0-3 7-3 7 0v3" stroke="#fff" strokeWidth="1.400" /><path d="M1 6h20v15l-5 2L1 21z" fill="#fff" /><path d="M5 11l4-.5V14H5zM10 10.300l5-.6V14h-5zM5 15h4v3.500L5 18zM10 15h5v4.300l-5-.6z" fill="#000b10" /></Icon>
          </AppButton>
          <AppButton aria-label="文件资源管理器">
            <Icon w={22} h={20} box="0 0 22 20"><path d="M0 1h8l1 2h13v15H0z" fill="#f8d775" /><path d="M0 5h22v13H0z" fill="#fde69a" /><path d="M4 19v-8h14v8h-4v-4H8v4z" fill="#38a9e4" /></Icon>
          </AppButton>
          <AppButton aria-label="广联达" $running>
            <Icon w={24} h={24} box="0 0 24 24"><path d="M23 1c-1 4-4 5-7 5 3 1 5 3 5 7 0 6-4 10-10 10C4 23 0 18 1 12 2 5 8 1 14 2c4 .7 7 .5 9-1z" fill="#1583e0" /><path d="M20 3c-3 2-6 1-9 1-5 1-8 5-7 9 0-4 4-7 8-7 3 0 6-1 8-3z" fill="#6cc6fa" /><path d="M15 9c-4-2-8 0-8 4 0 5 7 6 9 2h-5v-2.500h6" stroke="#000b10" strokeWidth="1.800" /></Icon>
          </AppButton>
          <AppButton aria-label="广联达计价软件" $running $active="#3c4244"><AppIcon size={24} /></AppButton>
          <AppButton aria-label="360浏览器" $running $active="#1f2a2d">
            <Icon w={22} h={22} box="0 0 22 22"><circle cx="11" cy="11.500" r="9.500" fill="#4db33b" stroke="#d9f0cf" /><path d="M16 15A6 6 0 1117 11.500H6" stroke="#fff" strokeWidth="2.600" /><path d="M1 18C3 8 14 1 21 2" stroke="#b8e8a0" strokeWidth="1.500" /></Icon>
          </AppButton>
          <AppButton aria-label="云应用" $running>
            <Icon w={24} h={24} box="0 0 24 24"><rect width="24" height="24" rx="4" fill="#0b92f4" /><path d="M16 7c-1-2-4-2-4 1v8c0 3-4 3-4.500 0M5 14c-1-3 2-3 4-2.500h6c5 0 5 5 1 4.500" stroke="#fff" strokeWidth="2" strokeLinecap="round" /></Icon>
          </AppButton>
        </AppRow>
        <Spacer />
        <Tray>
          <TrayText $w={76}>20%<br />CPU使用</TrayText>
          <TrayIcon $w={24} aria-label="显示隐藏的图标"><Icon w={14} h={8} box="0 0 14 8"><path d="M1 7l6-6 6 6" stroke="#fff" strokeWidth="1.300" /></Icon></TrayIcon>
          <TrayIcon $w={24} aria-label="电池"><Icon w={18} h={14} box="0 0 18 14"><path d="M5.500 4.500h10v7h-10zM16.500 7v2M1 1v3h4V1M3 4v4h3" stroke="#fff" strokeWidth="1.100" /><path d="M7 6h7v4H7z" fill="#fff" /></Icon></TrayIcon>
          <TrayIcon $w={24} aria-label="网络"><Icon w={14} h={14} box="0 0 14 14"><path d="M1 12C2 5 7 1 13 1M4 13c0-5 4-9 9-9M7 13c0-3 3-6 6-6" stroke="#bbb" strokeWidth="1.200" /><circle cx="11.500" cy="12" r="2" fill="#fff" /></Icon></TrayIcon>
          <TrayIcon $w={22} aria-label="音量"><Icon><path d="M.5 5.500h3l4-4v13l-4-4h-3z" stroke="#fff" /><path d="M10 5.500q2 2.500 0 5M12 3.500q3.500 4.500 0 9M14 2q4 6 0 12" stroke="#bbb" /></Icon></TrayIcon>
          <TrayIcon $w={34} aria-label="触摸键盘"><Icon w={22} h={13} box="0 0 22 13"><rect x=".5" y=".5" width="21" height="12" stroke="#fff" /><path d="M3 3.500h16M3 6h16" stroke="#fff" strokeDasharray="1 1" /><path d="M3 9h2M6 9h10M17 9h2" stroke="#fff" /></Icon></TrayIcon>
          <TrayIcon $w={24}>中</TrayIcon>
          <TrayIcon $w={32} aria-label="输入法"><SLogo size={16} /></TrayIcon>
          <TrayText $w={74}>17:15<br />2017/9/8</TrayText>
          <Notices aria-label="通知">
            <Icon w={16} h={17} box="0 0 16 17"><path d="M0 0h16v12h-7l-4 4v-4H0z" fill="#fff" /><path d="M3 3.500h10M3 6h10M3 8.500h6" stroke="#000" /></Icon>
            <NoticeCount>20</NoticeCount>
          </Notices>
        </Tray>
      </TaskBar>
    </Page>
  );
}
